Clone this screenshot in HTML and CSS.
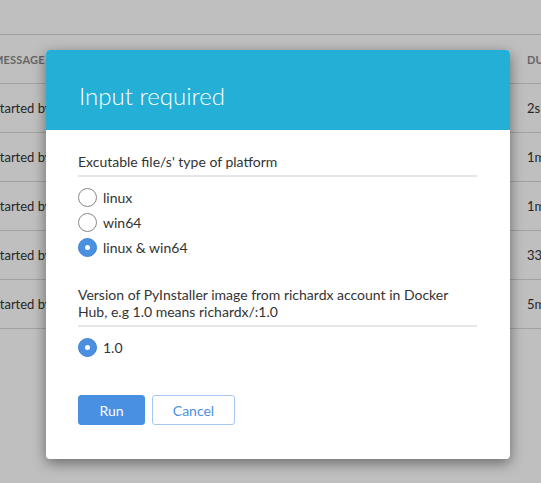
FILE: index.html
```html
<!DOCTYPE html>
<html>
<head>
<meta charset="utf-8">
<link rel="stylesheet" href="styles.css">
</head>
<body>
<div class="page">
  <div class="table">
    <div class="row head"><div class="c1">Message</div><div class="c2">Duration</div></div>
    <div class="row"><div class="c1">Started by user</div><div class="c2">2s</div></div>
    <div class="row"><div class="c1">Started by user</div><div class="c2">1m</div></div>
    <div class="row"><div class="c1">Started by user</div><div class="c2">1m</div></div>
    <div class="row"><div class="c1">Started by user</div><div class="c2">33s</div></div>
    <div class="row"><div class="c1">Started by user</div><div class="c2">5m</div></div>
  </div>
</div>
<div class="overlay"></div>
<div class="modal">
  <div class="modal-head"><h1 class="title">Input required</h1></div>
  <div class="modal-body">
    <div class="field">
      <div class="label">Excutable file/s' type of platform</div>
      <div class="options">
        <label class="opt"><span class="radio"></span><span>linux</span></label>
        <label class="opt"><span class="radio"></span><span>win64</span></label>
        <label class="opt"><span class="radio on"></span><span>linux &amp; win64</span></label>
      </div>
    </div>
    <div class="field second">
      <div class="label">Version of PyInstaller image from richardx account in Docker Hub, e.g 1.0 means richardx/:1.0</div>
      <div class="options">
        <label class="opt"><span class="radio on"></span><span>1.0</span></label>
      </div>
    </div>
    <div class="actions">
      <button class="btn run">Run</button>
      <button class="btn cancel">Cancel</button>
    </div>
  </div>
</div>
</body>
</html>
```
FILE: styles.css
```css
html, body { margin: 0; padding: 0; }
body {
  width: 541px; height: 483px; overflow: hidden;
  font-family: Lato, "Noto Sans", sans-serif;
  background: #fff;
  position: relative;
}
.page { padding-top: 34px; }
.table { border-top: 1px solid #d8d8d8; margin-left: -7px; }
.row {
  display: flex; align-items: center; height: 48px;
  border-bottom: 1px solid #d8d8d8;
  font-size: 13px; color: #333;
}
.row.head { font-size: 11px; color: #888; text-transform: uppercase; font-weight: 700; letter-spacing: 0.2px; }
.c1 { width: 534px; flex: none; white-space: nowrap; }
.c2 { flex: none; white-space: nowrap; }
.overlay { position: absolute; inset: 0; background: rgba(0,0,0,0.25); }
.modal {
  position: absolute; left: 46px; top: 50px; width: 464px; height: 409px;
  background: #fff; border-radius: 4px; overflow: hidden;
  box-shadow: 0 4px 14px rgba(0,0,0,0.45);
}
.modal-head { background: #23afd6; height: 80px; box-sizing: border-box; padding: 31px 32px 0 33px; }
.title { margin: 0; font-weight: 300; font-size: 24px; color: #fff; line-height: 29px; }
.modal-body { padding: 23px 33px 0 32px; }
.label {
  font-size: 14px; line-height: 17px; color: #333;
  padding-bottom: 5px; border-bottom: 2px solid #e6e6e6;
}
.options { display: flex; flex-direction: column; gap: 5px; padding-top: 10px; }
.opt { display: flex; align-items: center; gap: 6px; font-size: 14px; color: #333; height: 20px; }
.radio {
  width: 17px; height: 17px; border-radius: 50%; border: 1px solid #888; background: #fff;
  flex: none; box-sizing: content-box; position: relative;
}
.radio.on { background: #4a8fe0; border-color: #3f82d4; }
.radio.on::after {
  content: ""; position: absolute; left: 6px; top: 6px; width: 5px; height: 5px; border-radius: 50%; background: #fff;
}
.second { margin-top: 29px; }
.actions { display: flex; gap: 7px; margin-top: 38px; }
.btn {
  font-family: Lato, "Noto Sans", sans-serif; font-size: 14px; height: 30px; border-radius: 3px; cursor: pointer;
}
.run { width: 67px; background: #4a90e2; color: #fff; border: 1px solid #4a90e2; }
.cancel { width: 83px; background: #fff; color: #4a90e2; border: 1px solid #a6c8f0; }
```
